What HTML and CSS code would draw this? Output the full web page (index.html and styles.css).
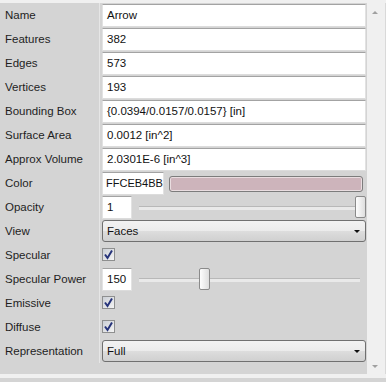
FILE: index.html
```html
<!DOCTYPE html>
<html lang="en">
<head>
    <meta charset="UTF-8">
    <title>Properties</title>
    <link rel="stylesheet" href="styles.css">
</head>
<body>
    <div class="frame">
        <div class="top-strip"></div>
        <div class="main">
            <div class="panel">
                <div class="grid">
                    <div class="label">Name</div>
                    <div class="value"><div class="field">Arrow</div></div>

                    <div class="label">Features</div>
                    <div class="value"><div class="field">382</div></div>

                    <div class="label">Edges</div>
                    <div class="value"><div class="field">573</div></div>

                    <div class="label">Vertices</div>
                    <div class="value"><div class="field">193</div></div>

                    <div class="label">Bounding Box</div>
                    <div class="value"><div class="field">{0.0394/0.0157/0.0157} [in]</div></div>

                    <div class="label">Surface Area</div>
                    <div class="value"><div class="field">0.0012 [in^2]</div></div>

                    <div class="label">Approx Volume</div>
                    <div class="value"><div class="field">2.0301E-6 [in^3]</div></div>

                    <div class="label">Color</div>
                    <div class="value split">
                        <div class="field color-code">FFCEB4BB</div>
                        <div class="swatch"></div>
                    </div>

                    <div class="label">Opacity</div>
                    <div class="value split">
                        <div class="field small">1</div>
                        <div class="slider">
                            <div class="track"></div>
                            <div class="thumb thumb-end"></div>
                        </div>
                    </div>

                    <div class="label">View</div>
                    <div class="value"><div class="combo">Faces<span class="arrow"></span></div></div>

                    <div class="label">Specular</div>
                    <div class="value"><span class="check"><svg width="11" height="11" viewBox="0 0 11 11"><path d="M2 5.5 L4.5 9 L9 1.5" fill="none" stroke="#26337a" stroke-width="2"/></svg></span></div>

                    <div class="label">Specular Power</div>
                    <div class="value split">
                        <div class="field small">150</div>
                        <div class="slider">
                            <div class="track"></div>
                            <div class="thumb" style="left: 62px"></div>
                        </div>
                    </div>

                    <div class="label">Emissive</div>
                    <div class="value"><span class="check"><svg width="11" height="11" viewBox="0 0 11 11"><path d="M2 5.5 L4.5 9 L9 1.5" fill="none" stroke="#26337a" stroke-width="2"/></svg></span></div>

                    <div class="label">Diffuse</div>
                    <div class="value"><span class="check"><svg width="11" height="11" viewBox="0 0 11 11"><path d="M2 5.5 L4.5 9 L9 1.5" fill="none" stroke="#26337a" stroke-width="2"/></svg></span></div>

                    <div class="label">Representation</div>
                    <div class="value"><div class="combo">Full<span class="arrow"></span></div></div>
                </div>
            </div>
            <div class="scrollbar">
                <span class="sb-up"></span>
                <span class="sb-down"></span>
            </div>
        </div>
        <div class="bottom-strip"></div>
    </div>
</body>
</html>
```

FILE: styles.css
```css
body {
    margin: 0;
    background: #f0f0f0;
    font-family: "Liberation Sans", Arial, sans-serif;
    font-size: 11.5px;
    color: #1e1e1e;
}
.frame {
    width: 386px;
    height: 382px;
    display: flex;
    flex-direction: column;
    overflow: hidden;
}
.top-strip {
    height: 3px;
    background: #f0f0f0;
}
.main {
    display: flex;
    height: 371px;
}
.panel {
    width: 367px;
    background: #d4d4d4;
}
.grid {
    display: grid;
    grid-template-columns: 100px 1fr;
    grid-auto-rows: 24px;
}
.label {
    padding-left: 5px;
    line-height: 25px;
    border-right: 1px solid #e6e6e6;
}
.value {
    padding: 1px 1px 0 2px;
    display: flex;
    align-items: flex-start;
}
.field {
    box-sizing: border-box;
    height: 23px;
    flex: 1;
    background: #fff;
    border: 1px solid #e2e2e2;
    border-top-color: #a3a3a3;
    border-bottom-color: #dcdcdc;
    padding-left: 4px;
    line-height: 21px;
    color: #111;
    white-space: nowrap;
    overflow: hidden;
}
.split {
    gap: 5px;
}
.color-code {
    flex: 0 0 62px;
    padding-left: 3px;
    font-size: 11px;
}
.swatch {
    flex: 1;
    height: 14px;
    margin: 4px 3px 0 0;
    background: #cdb4bb;
    border: 1px solid #7c7c7c;
    border-radius: 3px;
    box-shadow: inset 0 0 0 1px #e9dde0;
}
.small {
    flex: 0 0 30px;
}
.slider {
    flex: 1;
    position: relative;
    height: 23px;
}
.track {
    position: absolute;
    left: 2px;
    right: 6px;
    top: 10px;
    height: 3px;
    background: #e9e9e9;
    border-top: 1px solid #b8b8b8;
}
.thumb {
    position: absolute;
    top: 0;
    width: 9px;
    height: 20px;
    border: 1px solid #8a8a8a;
    border-radius: 2px;
    background: linear-gradient(to right, #fdfdfd, #dedede);
}
.thumb-end {
    right: 0;
}
.combo {
    box-sizing: border-box;
    flex: 1;
    height: 22px;
    border: 1px solid #707070;
    border-radius: 3px;
    background: linear-gradient(#f2f2f2 0%, #ebebeb 50%, #dddddd 51%, #d0d0d0 100%);
    padding-left: 4px;
    line-height: 20px;
    color: #111;
    position: relative;
}
.arrow {
    position: absolute;
    right: 5px;
    top: 9px;
    border-left: 3px solid transparent;
    border-right: 3px solid transparent;
    border-top: 3px solid #111;
}
.check {
    box-sizing: border-box;
    width: 13px;
    height: 13px;
    margin-top: 4px;
    border: 1px solid #8e8f8f;
    background: linear-gradient(135deg, #cbcfd5, #f4f4f4);
    display: flex;
    align-items: center;
    justify-content: center;
}
.check svg {
    display: block;
}
.scrollbar {
    flex: 1;
    background: #f0f0f0;
    border-right: 1px solid #d9d9d9;
    position: relative;
}
.sb-up {
    position: absolute;
    left: 5px;
    top: 8px;
    border-left: 3px solid transparent;
    border-right: 3px solid transparent;
    border-bottom: 3px solid #a0a0a0;
}
.sb-down {
    position: absolute;
    left: 5px;
    bottom: 6px;
    border-left: 3px solid transparent;
    border-right: 3px solid transparent;
    border-top: 3px solid #a0a0a0;
}
.bottom-strip {
    flex: 1;
    background: #f0f0f0;
    border-bottom: 4px solid #d4d4d4;
}
```
